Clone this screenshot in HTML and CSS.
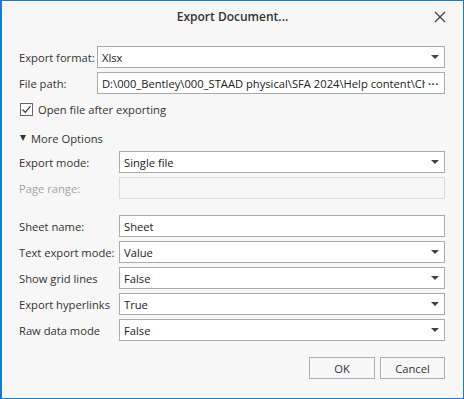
FILE: index.html
```html
<!DOCTYPE html>
<html>
<head>
<meta charset="utf-8">
<link rel="stylesheet" href="styles.css">
</head>
<body>
<div class="dialog">
  <div class="titlebar">
    <span></span>
    <span class="title">Export Document...</span>
    <span class="close-wrap">
      <svg class="close" width="12" height="12" viewBox="0 0 12 12"><path d="M1 1 L11 11 M11 1 L1 11" stroke="#444" stroke-width="1.3" fill="none"/></svg>
    </span>
  </div>
  <div class="content">
    <div class="form form-top">
      <label class="lbl">Export format:</label>
      <div class="box combo"><span class="val">Xlsx</span><span class="arrow"></span></div>
      <label class="lbl">File path:</label>
      <div class="box"><span class="val path">D:\000_Bentley\000_STAAD physical\SFA 2024\Help content\Chapters\Export.xlsx</span><span class="dots">&middot;&middot;&middot;</span></div>
    </div>
    <div class="check-row">
      <span class="checkbox"><svg width="11" height="11" viewBox="0 0 11 11"><path d="M1.5 5.5 L4.3 8.3 L9.5 2.2" stroke="#333" stroke-width="1.2" fill="none"/></svg></span>
      <span class="check-text">Open file after exporting</span>
    </div>
    <div class="more"><span class="tri"></span><span>More Options</span></div>
    <div class="form form-mid">
      <label class="lbl">Export mode:</label>
      <div class="box combo"><span class="val">Single file</span><span class="arrow"></span></div>
      <label class="lbl disabled">Page range:</label>
      <div class="box disabled-box"></div>
    </div>
    <div class="form form-bottom">
      <label class="lbl">Sheet name:</label>
      <div class="box"><span class="val">Sheet</span></div>
      <label class="lbl">Text export mode:</label>
      <div class="box combo"><span class="val">Value</span><span class="arrow"></span></div>
      <label class="lbl">Show grid lines</label>
      <div class="box combo"><span class="val">False</span><span class="arrow"></span></div>
      <label class="lbl">Export hyperlinks</label>
      <div class="box combo"><span class="val">True</span><span class="arrow"></span></div>
      <label class="lbl">Raw data mode</label>
      <div class="box combo"><span class="val">False</span><span class="arrow"></span></div>
    </div>
    <div class="buttons">
      <button class="btn ok">OK</button>
      <button class="btn cancel">Cancel</button>
    </div>
  </div>
</div>
</body>
</html>
```
FILE: styles.css
```css
html, body {
  margin: 0;
  padding: 0;
  background: #f7f7f7;
}
.dialog {
  width: 464px;
  height: 399px;
  box-sizing: border-box;
  border: 1px solid #1979ca;
  border-left-width: 2px;
  background: #f7f7f7;
  font-family: "Open Sans", "Noto Sans", sans-serif;
  font-size: 11.2px;
  color: #333;
  display: flex;
  flex-direction: column;
}
.titlebar {
  height: 31px;
  display: grid;
  grid-template-columns: 1fr auto 1fr;
  align-items: center;
}
.title {
  font-weight: 600;
  font-size: 12px;
  color: #333;
}
.close-wrap {
  justify-self: end;
  margin-right: 17px;
  display: flex;
}
.content {
  padding: 0 18px 0 17px;
  display: flex;
  flex-direction: column;
}
.form {
  display: grid;
  row-gap: 4px;
  grid-auto-rows: 22px;
  align-items: center;
}
.form-top {
  margin-top: 14px;
  grid-template-columns: 78px 1fr;
}
.form-mid {
  margin-top: 6px;
  grid-template-columns: 100px 1fr;
}
.form-bottom {
  margin-top: 16px;
  grid-template-columns: 100px 1fr;
}
.lbl {
  white-space: nowrap;
  color: #333;
}
.lbl.disabled {
  color: #a3a3a3;
}
.box {
  height: 22px;
  box-sizing: border-box;
  border: 1px solid #ababab;
  background: #fff;
  display: flex;
  align-items: center;
  padding: 0 5px 0 4px;
  overflow: hidden;
}
.box.disabled-box {
  border-color: #dcdcdc;
  background: #f7f7f7;
}
.val {
  flex: 1;
  white-space: nowrap;
  overflow: hidden;
  text-overflow: clip;
  color: #222;
}
.arrow {
  width: 0;
  height: 0;
  border-left: 4px solid transparent;
  border-right: 4px solid transparent;
  border-top: 4px solid #444;
}
.dots {
  font-weight: 700;
  letter-spacing: 0.5px;
  padding-left: 3px;
  color: #333;
}
.check-row {
  margin-top: 8px;
  display: flex;
  align-items: center;
  height: 14px;
}
.checkbox {
  width: 13px;
  height: 13px;
  box-sizing: border-box;
  border: 1px solid #666;
  background: #fff;
  display: flex;
  align-items: center;
  justify-content: center;
  margin-left: 1px;
  margin-right: 5px;
}
.more {
  margin-top: 15px;
  display: flex;
  align-items: center;
  height: 14px;
}
.tri {
  width: 0;
  height: 0;
  border-left: 3.5px solid transparent;
  border-right: 3.5px solid transparent;
  border-top: 6px solid #333;
  margin-left: 1px;
  margin-right: 5px;
}
.buttons {
  margin-top: 16px;
  display: flex;
  justify-content: flex-end;
  gap: 5px;
}
.btn {
  height: 22px;
  box-sizing: border-box;
  border: 1px solid #adadad;
  background: #f7f7f7;
  font-family: inherit;
  font-size: 11.2px;
  color: #333;
  padding: 0;
}
.btn.ok { width: 66px; }
.btn.cancel { width: 65px; }
```
